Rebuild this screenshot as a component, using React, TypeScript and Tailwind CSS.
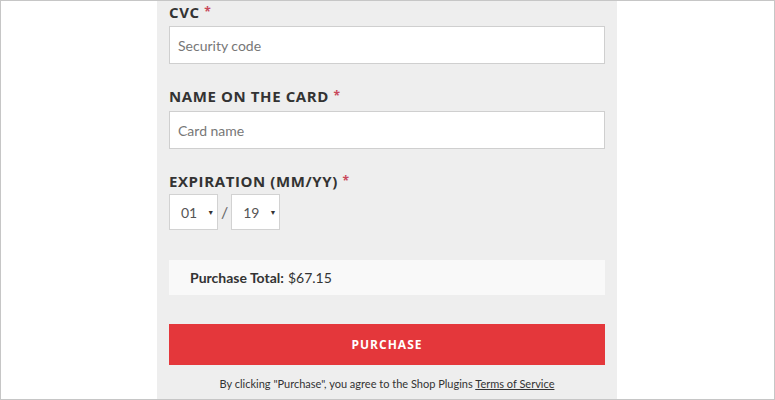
import React from 'react';

const labelFont = { fontFamily: '"Open Sans", "DejaVu Sans", sans-serif' };

function FieldLabel({ text }: { text: string }) {
  return (
    <div
      className="h-[20px] leading-[20px] text-[15px] font-bold tracking-[0.6px] text-[#333] uppercase"
      style={labelFont}
    >
      {text} <span className="text-[#c8485a] text-[12px] align-top">*</span>
    </div>
  );
}

function TextInput({ placeholder }: { placeholder: string }) {
  return (
    <div className="h-[38px] w-full bg-white border border-[#cfcfcf] flex items-center px-[8px] text-[14px] text-[#777]">
      {placeholder}
    </div>
  );
}

function SelectBox({ value }: { value: string }) {
  return (
    <div className="h-[36px] w-[49px] bg-white border border-[#d2d2d2] flex items-center pl-[11px] text-[14px] text-[#555]">
      <span>{value}</span>
      <span className="ml-[10px] text-[7px] text-[#333]">▼</span>
    </div>
  );
}

export default function App() {
  return (
    <div
      className="w-[775px] h-[400px] bg-white border border-[#c6c6c6] overflow-hidden"
      style={{ fontFamily: 'Lato, "Open Sans", sans-serif' }}
    >
      <div className="ml-[156px] w-[460px] h-full bg-[#eeeeee] pt-[1px] px-[12px]">
        <FieldLabel text="CVC" />
        <div className="mt-[4px]">
          <TextInput placeholder="Security code" />
        </div>

        <div className="mt-[22px]">
          <FieldLabel text="Name on the card" />
        </div>
        <div className="mt-[5px]">
          <TextInput placeholder="Card name" />
        </div>

        <div className="mt-[22px]">
          <FieldLabel text="Expiration (MM/YY)" />
        </div>
        <div className="mt-[3px] flex items-center gap-[3px]">
          <SelectBox value="01" />
          <span className="text-[16px] text-[#666]">/</span>
          <SelectBox value="19" />
        </div>

        <div className="mt-[30px] h-[35px] bg-[#f9f9f9] flex items-center pl-[21px] text-[14px] text-[#333]">
          <span className="font-bold">Purchase Total:</span>
          <span className="ml-[4px]">$67.15</span>
        </div>

        <button
          className="mt-[29px] h-[41px] w-full bg-[#e4373b] text-white text-[12px] font-bold tracking-[1px]"
          style={labelFont}
        >
          PURCHASE
        </button>

        <p className="mt-[11px] text-center text-[11px] text-[#333]">
          By clicking "Purchase", you agree to the Shop Plugins{' '}
          <span className="underline">Terms of Service</span>
        </p>
      </div>
    </div>
  );
}
